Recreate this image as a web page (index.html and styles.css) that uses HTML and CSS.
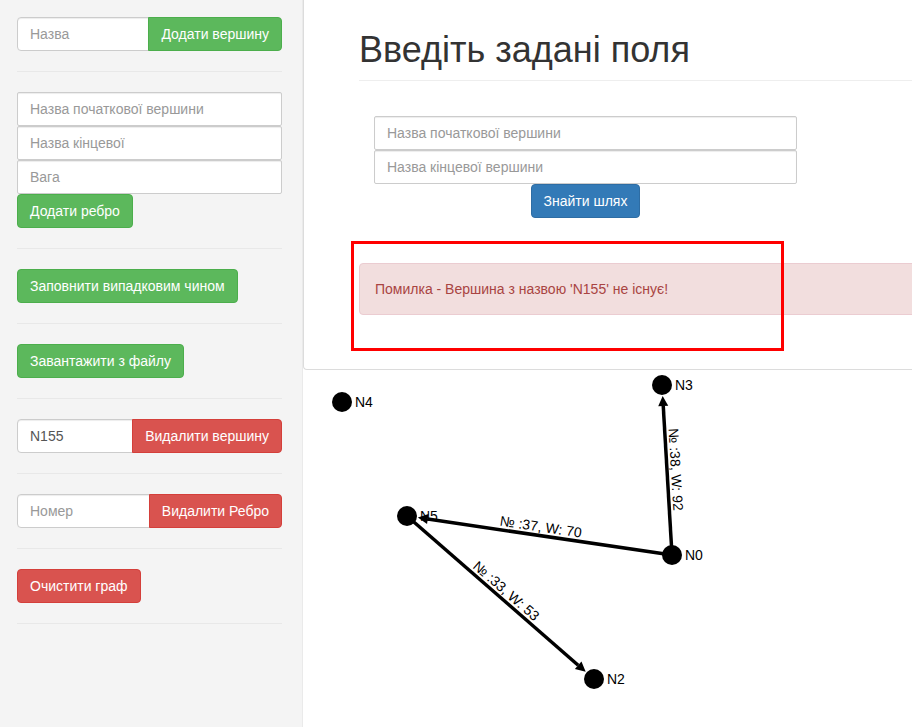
FILE: index.html
```html
<!DOCTYPE html>
<html lang="uk">
<head>
<meta charset="utf-8">
<title>Граф</title>
<link rel="stylesheet" href="styles.css">
</head>
<body>
<div class="app">
  <aside class="sidebar">
    <div class="input-group">
      <input class="form-control" type="text" placeholder="Назва">
      <button class="btn btn-success">Додати вершину</button>
    </div>
    <hr>
    <div class="stack">
      <input class="form-control" type="text" placeholder="Назва початкової вершини">
      <input class="form-control" type="text" placeholder="Назва кінцевої">
      <input class="form-control" type="text" placeholder="Вага">
    </div>
    <button class="btn btn-success">Додати ребро</button>
    <hr>
    <button class="btn btn-success">Заповнити випадковим чином</button>
    <hr>
    <button class="btn btn-success">Завантажити з файлу</button>
    <hr>
    <div class="input-group">
      <input class="form-control" type="text" value="N155">
      <button class="btn btn-danger">Видалити вершину</button>
    </div>
    <hr>
    <div class="input-group">
      <input class="form-control" type="text" placeholder="Номер">
      <button class="btn btn-danger">Видалити Ребро</button>
    </div>
    <hr>
    <button class="btn btn-danger">Очистити граф</button>
    <hr>
  </aside>
  <main class="main">
    <section class="panel">
      <div class="panel-inner">
        <h1 class="page-header">Введіть задані поля</h1>
        <form class="path-form">
          <input class="form-control" type="text" placeholder="Назва початкової вершини">
          <input class="form-control" type="text" placeholder="Назва кінцевої вершини">
          <button class="btn btn-primary" type="button">Знайти шлях</button>
        </form>
        <div class="alert">Помилка - Вершина з назвою 'N155' не існує!</div>
      </div>
      <div class="highlight"></div>
    </section>
    <svg class="graph" width="609" height="357" viewBox="0 0 609 357">
      <g class="nodes">
        <circle cx="39" cy="32" r="10"/>
        <circle cx="359" cy="15" r="10"/>
        <circle cx="104" cy="146" r="10"/>
        <circle cx="369" cy="185" r="10"/>
        <circle cx="291" cy="309" r="10"/>
      </g>
      <g class="node-labels">
        <text x="52" y="37">N4</text>
        <text x="372" y="20">N3</text>
        <text x="117" y="151">N5</text>
        <text x="382" y="190">N0</text>
        <text x="304" y="314">N2</text>
      </g>
      <g class="edges">
        <line x1="369" y1="185" x2="360.24" y2="35.96"/>
        <polygon points="359.65,25.98 365.23,35.67 355.25,36.25"/>
        <line x1="369" y1="185" x2="124.77" y2="149.06"/>
        <polygon points="114.88,147.60 124.04,154.01 125.50,144.11"/>
        <line x1="104" y1="146" x2="275.17" y2="295.20"/>
        <polygon points="282.71,301.77 278.46,291.43 271.88,298.97"/>
      </g>
      <g class="edge-labels">
        <text transform="translate(364 100) rotate(86.63)" y="-4">№ :38, W: 92</text>
        <text transform="translate(236.5 165.5) rotate(8.37)" y="-4">№ :37, W: 70</text>
        <text transform="translate(197.5 227.5) rotate(41.07)" y="-4">№ :33, W: 53</text>
      </g>
    </svg>
  </main>
</div>
</body>
</html>
```
FILE: styles.css
```css
* { box-sizing: border-box; }

html, body {
  margin: 0;
  padding: 0;
}

body {
  font-family: "Liberation Sans", Arial, sans-serif;
  font-size: 14px;
  line-height: 20px;
  color: #333;
  background: #fff;
  overflow: hidden;
}

.app {
  display: flex;
  min-height: 100vh;
}

/* ---------- sidebar ---------- */
.sidebar {
  flex: none;
  width: 303px;
  background: #f4f4f4;
  border-right: 1px solid #eaeaea;
  padding: 17px 20px 0 17px;
  display: flex;
  flex-direction: column;
  align-items: flex-start;
}

.sidebar hr {
  align-self: stretch;
  margin: 20px 0;
  height: 0;
  border: 0;
  border-top: 1px solid #e8e8e8;
}

.input-group {
  align-self: stretch;
  display: flex;
}

.input-group .form-control {
  flex: 1 1 auto;
  min-width: 0;
  border-radius: 4px 0 0 4px;
}

.input-group .btn {
  flex: none;
  border-radius: 0 4px 4px 0;
  margin-left: -1px;
}

.stack {
  align-self: stretch;
  display: flex;
  flex-direction: column;
}

.stack .form-control {
  border-radius: 2px;
}

/* ---------- controls ---------- */
.form-control {
  display: block;
  width: 100%;
  height: 34px;
  padding: 6px 12px;
  font-family: inherit;
  font-size: 14px;
  line-height: 20px;
  color: #555;
  background: #fff;
  border: 1px solid #ccc;
  border-radius: 4px;
  box-shadow: inset 0 1px 1px rgba(0, 0, 0, 0.075);
  outline: none;
}

.form-control::placeholder {
  color: #999;
}

.btn {
  display: inline-block;
  height: 34px;
  padding: 6px 12px;
  font-family: inherit;
  font-size: 14px;
  line-height: 20px;
  color: #fff;
  white-space: nowrap;
  border: 1px solid transparent;
  border-radius: 4px;
  cursor: pointer;
}

.btn-success {
  background: #5cb85c;
  border-color: #4cae4c;
}

.btn-danger {
  background: #d9534f;
  border-color: #d43f3a;
}

.btn-primary {
  background: #337ab7;
  border-color: #2e6da4;
}

/* ---------- main ---------- */
.main {
  flex: 1 1 auto;
  min-width: 0;
  overflow: hidden;
}

.panel {
  position: relative;
  background: #fff;
  border-left: 1px solid #dcdcdc;
  border-bottom: 1px solid #dcdcdc;
  border-bottom-left-radius: 4px;
  padding: 30px 0 54px 55px;
}

.panel-inner {
  width: 640px;
}

.page-header {
  margin: 0;
  padding-bottom: 10px;
  font-size: 36px;
  line-height: 40px;
  font-weight: 500;
  color: #333;
  border-bottom: 1px solid #eee;
}

.path-form {
  margin: 35px 0 0 15px;
  width: 423px;
  display: flex;
  flex-direction: column;
  align-items: center;
}

.path-form .form-control {
  border-radius: 2px;
}

.alert {
  margin-top: 45px;
  padding: 15px;
  background: #f2dede;
  color: #a94442;
  border: 1px solid #ebccd1;
  border-radius: 4px;
  line-height: 20px;
}

.highlight {
  position: absolute;
  left: 47px;
  top: 241px;
  width: 433px;
  height: 110px;
  border: 3px solid #f00;
}

/* ---------- graph ---------- */
.graph {
  display: block;
  font-family: "Liberation Sans", Arial, sans-serif;
  font-size: 14px;
}

.nodes circle {
  fill: #000;
}

.node-labels text,
.edge-labels text {
  fill: #000;
}

.edge-labels text {
  text-anchor: middle;
}

.edges line {
  stroke: #000;
  stroke-width: 3.5;
}

.edges polygon {
  fill: #000;
}
```
